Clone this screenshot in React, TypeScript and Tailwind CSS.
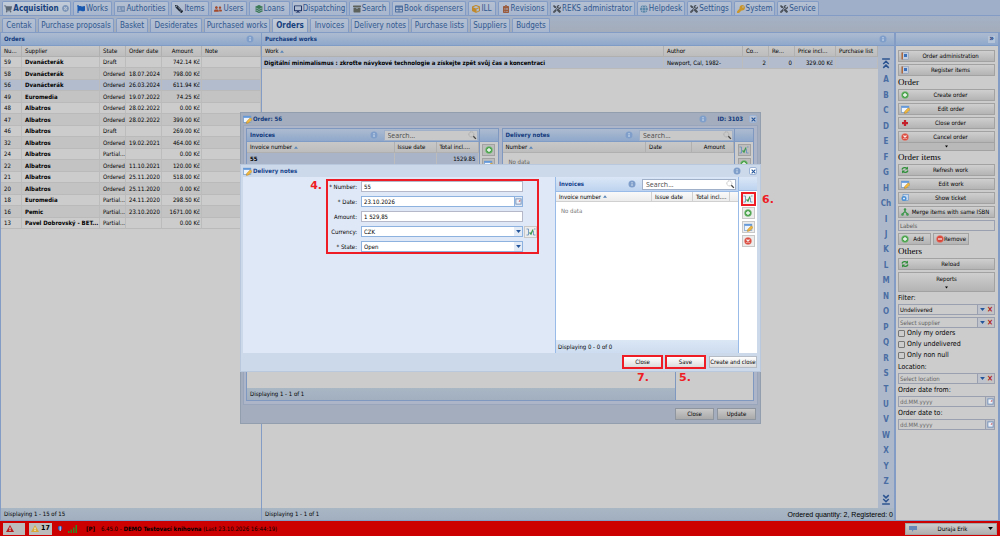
import type { ReactNode } from 'react'
import clsx from 'clsx'
import {
  FaShoppingCart, FaFlag, FaAddressCard, FaPencilAlt, FaUserFriends, FaArchive,
  FaCube, FaTools, FaKey, FaTable, FaClipboardList, FaLayerGroup, FaDesktop, FaGlobe, FaTimesCircle,
} from 'react-icons/fa'

const SANS = "font-['DejaVu_Sans_Condensed','Noto_Sans',sans-serif]"

/* ---------- icons ---------- */

function PlusIcon() {
  return (
    <svg viewBox="0 0 16 16" className="size-2 shrink-0">
      <circle cx="8" cy="8" r="7" fill="#4ba24c" stroke="#86c286" />
      <path d="M8 4v8M4 8h8" stroke="#f2f8f2" strokeWidth="2.6" />
    </svg>
  )
}

function RemoveIcon({ cross = false }: { cross?: boolean }) {
  return (
    <svg viewBox="0 0 16 16" className="size-2 shrink-0">
      <circle cx="8" cy="8" r="7" fill="#d8473a" stroke="#e88a7e" />
      <path d={cross ? 'M5 5l6 6M11 5l-6 6' : 'M4 8h8'} stroke="#f8eeee" strokeWidth="2.4" />
    </svg>
  )
}

function EditIcon() {
  return (
    <svg viewBox="0 0 16 16" className="size-[9px] shrink-0">
      <rect x="1" y="2" width="13" height="11" fill="#eef4fc" stroke="#5b8ac4" />
      <rect x="1" y="2" width="13" height="3" fill="#5b93d8" />
      <path d="M6 15l1-4 6-6 3 3-6 6z" fill="#f0b840" stroke="#b07818" strokeWidth=".8" />
    </svg>
  )
}

function ReportIcon() {
  return (
    <svg viewBox="0 0 16 16" className="size-2 shrink-0">
      <rect x="2" y="1" width="13" height="14" fill="#c3cde0" stroke="#8292ad" />
      <rect x="1" y="1" width="3" height="14" fill="#b06a40" />
      <rect x="6" y="4" width="6" height="6" fill="#3c70b8" />
    </svg>
  )
}

function CrossIcon() {
  return (
    <svg viewBox="0 0 16 16" className="size-2 shrink-0">
      <path d="M8 2v12M2 8h12" stroke="#c4202c" strokeWidth="4.500" />
    </svg>
  )
}

function RefreshIcon() {
  return (
    <svg viewBox="0 0 16 16" className="size-2 shrink-0" fill="none" stroke="#2f8f3a" strokeWidth="2.600">
      <path d="M2 7c1-4 7-5 10-2M14 9c-1 4-7 5-10 2" />
      <path d="M14 1v6H8zM2 15V9h6z" fill="#2f8f3a" stroke="none" />
    </svg>
  )
}

function TicketIcon() {
  return (
    <svg viewBox="0 0 16 16" className="size-2 shrink-0">
      <rect x="4" y="1" width="11" height="12" fill="#c8d8ec" stroke="#4a86c8" />
      <circle cx="6" cy="9" r="5" fill="#4a90d4" />
      <path d="M4 7.500h4v3H4z" fill="#dbe8f8" />
    </svg>
  )
}

function MergeIcon() {
  return (
    <svg viewBox="0 0 16 16" className="size-2 shrink-0" fill="none" stroke="#3a9648" strokeWidth="2.200">
      <path d="M8 3v4L3 12M8 7l5 5" />
      <circle cx="8" cy="3" r="1.500" /><circle cx="3" cy="13" r="1.500" /><circle cx="13" cy="13" r="1.500" />
    </svg>
  )
}

function LinkIcon() {
  return (
    <svg viewBox="0 0 20 16" className="h-2 w-[10px] shrink-0" fill="none">
      <path d="M1 2h4v12H1M19 2h-3M19 14h-4V6" stroke="#6b93bd" strokeWidth="1.800" />
      <path d="M7 9l3 3 4-9" stroke="#3f9a50" strokeWidth="2.600" />
    </svg>
  )
}

function InfoIcon() {
  return (
    <svg viewBox="0 0 16 16" className="size-2 shrink-0">
      <circle cx="8" cy="8" r="7" fill="#7f9fca" />
      <path d="M8 4v2M8 7v5" stroke="#d3dfef" strokeWidth="2" />
    </svg>
  )
}

function SearchIcon() {
  return (
    <svg viewBox="0 0 16 16" className="size-[9px] shrink-0">
      <circle cx="6" cy="6" r="4.500" fill="none" stroke="#9a9a9a" strokeWidth="1.200" strokeDasharray="2 1" />
      <path d="M9.500 9.500L14 14" stroke="#444" strokeWidth="2.400" />
    </svg>
  )
}

function CalendarIcon() {
  return (
    <svg viewBox="0 0 16 16" className="size-[7px]">
      <rect x="2" y="2" width="12" height="12" fill="#eef2f8" stroke="#6c8cb8" strokeWidth="2" />
      <path d="M8 8l4-4v4z" fill="#c03030" />
    </svg>
  )
}

function Arrow({ className = 'fill-[#24559a]' }: { className?: string }) {
  return (
    <svg viewBox="0 0 8 5" className={clsx('h-[3px] w-[5px] shrink-0', className)}>
      <path d="M0 0h8L4 5z" />
    </svg>
  )
}

function SortArrow() {
  return (
    <svg viewBox="0 0 8 5" className="inline h-[3px] w-1 fill-[#5a86b8]">
      <path d="M0 5h8L4 0z" />
    </svg>
  )
}

function JumpIcon({ down = false }: { down?: boolean }) {
  return (
    <svg viewBox="0 0 14 20" className={clsx('h-[11px] w-2', down && 'rotate-180')} fill="none" stroke="#2c5490" strokeWidth="2.800">
      <path d="M0 2h14M2 11l5-5 5 5M2 18l5-5 5 5" />
    </svg>
  )
}

/* ---------- tabs ---------- */

const modules: { label: string; width: string; icon: ReactNode }[] = [
  { label: 'Acquisition', width: 'w-[69px]', icon: <FaShoppingCart className="text-[#5d6877]" /> },
  { label: 'Works', width: 'w-[39px]', icon: <FaFlag className="text-[#1858b0]" /> },
  { label: 'Authorities', width: 'w-[55px]', icon: <FaAddressCard className="text-[#7b93b5]" /> },
  { label: 'Items', width: 'w-[38px]', icon: <FaPencilAlt className="rotate-90 text-[#1d2733]" /> },
  { label: 'Users', width: 'w-9', icon: <FaUserFriends className="text-[#a34a2c]" /> },
  { label: 'Loans', width: 'w-[41px]', icon: <FaLayerGroup className="text-[#3b7a55]" /> },
  { label: 'Dispatching', width: 'w-[55px]', icon: <FaDesktop className="text-[#15295c]" /> },
  { label: 'Search', width: 'w-[41px]', icon: <FaArchive className="text-[#5d635c]" /> },
  { label: 'Book dispensers', width: 'w-[74px]', icon: <FaTable className="text-[#50719f]" /> },
  { label: 'ILL', width: 'w-7', icon: <FaCube className="text-[#c08a2c]" /> },
  { label: 'Revisions', width: 'w-[50px]', icon: <FaClipboardList className="text-[#9a5a3c]" /> },
  { label: 'REKS administrator', width: 'w-[85px]', icon: <FaTools className="text-[#4a5058]" /> },
  { label: 'Helpdesk', width: 'w-[48px]', icon: <FaGlobe className="text-[#5b87a8]" /> },
  { label: 'Settings', width: 'w-[45px]', icon: <FaTools className="text-[#4a5058]" /> },
  { label: 'System', width: 'w-[41px]', icon: <FaKey className="text-[#c9962e]" /> },
  { label: 'Service', width: 'w-[42px]', icon: <FaTools className="text-[#4a5058]" /> },
]

const sections = [
  { label: 'Centak', width: 'w-[34px]' },
  { label: 'Purchase proposals', width: 'w-[76px]' },
  { label: 'Basket', width: 'w-8' },
  { label: 'Desiderates', width: 'w-[52px]' },
  { label: 'Purchased works', width: 'w-[66px]' },
  { label: 'Orders', width: 'w-9' },
  { label: 'Invoices', width: 'w-[39px]' },
  { label: 'Delivery notes', width: 'w-[58px]' },
  { label: 'Purchase lists', width: 'w-[57px]' },
  { label: 'Suppliers', width: 'w-10' },
  { label: 'Budgets', width: 'w-[38px]' },
]

function Tab({ active, width, children }: { active: boolean; width: string; children: ReactNode }) {
  return (
    <button
      className={clsx(
        'flex shrink-0 items-center justify-center gap-px whitespace-nowrap rounded-t-xs border border-b-0 border-[#829cc6] text-[8px] leading-none',
        width,
        active
          ? 'bg-linear-to-b from-[#c3ccd9] to-[#b3bfcf] font-bold text-[#15407c]'
          : 'bg-linear-to-b from-[#b5c0d2] to-[#a8b6ce] text-[#30588f]',
      )}
    >
      {children}
    </button>
  )
}

/* ---------- tables ---------- */

type Row = [string, string, string, string, string]

const orders: Row[] = [
  ['59', 'Dvanácterák', 'Draft', '', '742.14 Kč'],
  ['58', 'Dvanácterák', 'Ordered', '18.07.2024', '798.00 Kč'],
  ['56', 'Dvanácterák', 'Ordered', '26.03.2024', '611.94 Kč'],
  ['49', 'Euromedia', 'Ordered', '19.07.2022', '74.25 Kč'],
  ['48', 'Albatros', 'Ordered', '28.02.2022', '0.00 Kč'],
  ['47', 'Albatros', 'Ordered', '28.02.2022', '399.00 Kč'],
  ['46', 'Albatros', 'Draft', '', '269.00 Kč'],
  ['32', 'Albatros', 'Ordered', '19.02.2021', '464.00 Kč'],
  ['24', 'Albatros', 'Partial...', '', '0.00 Kč'],
  ['22', 'Albatros', 'Ordered', '11.10.2021', '120.00 Kč'],
  ['21', 'Albatros', 'Ordered', '25.11.2020', '518.00 Kč'],
  ['20', 'Albatros', 'Ordered', '25.11.2020', '0.00 Kč'],
  ['18', 'Euromedia', 'Partial...', '24.11.2020', '298.50 Kč'],
  ['16', 'Pemic', 'Partial...', '23.10.2020', '1671.00 Kč'],
  ['13', 'Pavel Dobrovský - BET...', 'Partial...', '', '0.00 Kč'],
]

const TABLE = 'w-full table-fixed border-separate border-spacing-0 whitespace-nowrap text-left text-[6px] leading-none'
const TH = 'h-[11px] overflow-hidden border-r border-b border-[#b0b0b0] bg-linear-to-b from-[#c8c8c8] to-[#bdbdbd] px-[3px] py-0 font-normal'
const TD = 'overflow-hidden border-r border-b border-r-[#bcbcbc] border-b-[#bababa] px-[2px] py-0'
const HEAD = 'flex h-[13px] shrink-0 items-center border-b border-[#7f9cc6] bg-linear-to-b from-[#adbbd0] to-[#8fa8cb] px-[3px] text-[6px] font-bold leading-none text-[#11397c]'
const FOOT = 'flex h-3 shrink-0 items-center bg-linear-to-b from-[#a9b6c4] to-[#a1afbf] px-[3px] text-[6px] leading-none'

function OrdersTable() {
  return (
    <table className={TABLE}>
      <colgroup>
        <col className="w-[21px]" /><col className="w-[78px]" /><col className="w-[26px]" />
        <col className="w-9" /><col className="w-10" /><col />
      </colgroup>
      <thead>
        <tr>
          <th className={TH}>Nu...</th>
          <th className={TH}>Supplier</th>
          <th className={TH}>State</th>
          <th className={TH}>Order date</th>
          <th className={clsx(TH, 'pr-2 text-right')}>Amount</th>
          <th className={TH}>Note</th>
        </tr>
      </thead>
      <tbody>
        {orders.map(([num, supplier, state, date, amount]) => (
          <tr
            key={num}
            className={clsx('odd:h-[11px] even:h-3', num === '56' ? 'bg-[#b2bccc]' : 'odd:bg-[#cccccc] even:bg-[#c3c3c3]')}
          >
            <td className={clsx(TD, 'pl-[3px]')}>{num}</td>
            <td className={clsx(TD, 'pl-[3px] font-bold')}>{supplier}</td>
            <td className={clsx(TD, 'pl-[3px]')}>{state}</td>
            <td className={clsx(TD, 'pr-0 pl-[3px]')}>{date}</td>
            <td className={clsx(TD, 'px-0 pr-px text-right')}>{amount}</td>
            <td className={TD} />
          </tr>
        ))}
      </tbody>
    </table>
  )
}

function WorksTable() {
  return (
    <table className={TABLE}>
      <colgroup>
        <col /><col className="w-[79px]" /><col className="w-[26px]" />
        <col className="w-[26px]" /><col className="w-[41px]" /><col className="w-[42px]" />
      </colgroup>
      <thead>
        <tr>
          <th className={TH}>Work <SortArrow /></th>
          <th className={TH}>Author</th>
          <th className={TH}>Co...</th>
          <th className={TH}>Re...</th>
          <th className={TH}>Price incl...</th>
          <th className={TH}>Purchase list</th>
        </tr>
      </thead>
      <tbody>
        <tr className="h-3 bg-[#b2bccc]">
          <td className={clsx(TD, 'font-bold')}>
            Digitální minimalismus : zkroťte návykové technologie a získejte zpět svůj čas a koncentraci
          </td>
          <td className={clsx(TD, 'pl-[3px]')}>Newport, Cal, 1982-</td>
          <td className={clsx(TD, 'text-right')}>2</td>
          <td className={clsx(TD, 'text-right')}>0</td>
          <td className={clsx(TD, 'px-0 text-right')}>329.00 Kč</td>
          <td className={TD} />
        </tr>
      </tbody>
    </table>
  )
}

/* ---------- sidebar ---------- */

function SideButton({ icon, children }: { icon?: ReactNode; children: ReactNode }) {
  return (
    <button className="flex h-3 w-full items-center border border-[#a2a2a2] bg-linear-to-b from-[#cfcfcf] to-[#b4b4b4] px-[2px] text-[6px] leading-none">
      {icon}
      <span className="flex-1 whitespace-nowrap text-center">{children}</span>
    </button>
  )
}

function FilterSelect({ label, option, muted = false }: { label: string; option: string; muted?: boolean }) {
  return (
    <div className="flex h-[11px] shrink-0">
      <div className="relative flex-1">
        <select
          aria-label={label}
          className={clsx('block h-full w-full appearance-none border border-[#9aa0b0] bg-[#cccccc] px-px text-[6px] leading-none', muted && 'text-[#5f5f5f]')}
        >
          <option>{option}</option>
        </select>
        <span className="pointer-events-none absolute inset-y-px right-0 flex w-[9px] items-center justify-center border-l border-[#9aa0b0] bg-[#bfc4cc]">
          <Arrow />
        </span>
      </div>
      <button aria-label={`Clear ${label}`} className="flex w-[9px] items-center justify-center border border-l-0 border-[#9aa0b0] bg-[#c4c4c4] text-[8px] font-bold leading-none text-[#b01818]">×</button>
    </div>
  )
}

function DateFilter({ label }: { label: string }) {
  return (
    <div className="shrink-0">
      <label htmlFor={label} className="flex h-3 items-center text-[7px] leading-none">{label}</label>
      <div className="flex h-[11px]">
        <input id={label} placeholder="dd.MM.yyyy" className="w-0 flex-1 border border-[#9aa0b0] bg-[#cccccc] px-px text-[6px] leading-none placeholder:text-[#6a6a6a]" />
        <button aria-label="Pick date" className="flex w-[9px] items-center justify-center border border-l-0 border-[#9aa0b0] bg-[#bfc4cc]"><CalendarIcon /></button>
      </div>
    </div>
  )
}

function GroupTitle({ children }: { children: ReactNode }) {
  return <h2 className="flex h-[9px] shrink-0 items-center font-['Liberation_Serif',serif] text-[9px] leading-none">{children}</h2>
}

function Sidebar() {
  return (
    <aside className="flex w-[106px] shrink-0 flex-col border-r-2 border-l-2 border-[#829cc6] bg-[#cccccc]">
      <div className={clsx(HEAD, 'justify-end')}>
        <button aria-label="Collapse" className="flex size-[7px] items-center justify-center bg-[#b5c3d8] text-[8px] leading-none">»</button>
      </div>
      <div className="flex flex-col gap-[2px] py-1 pr-[3px] pl-[2px]">
        <SideButton icon={<ReportIcon />}>Order administration</SideButton>
        <SideButton icon={<ReportIcon />}>Register items</SideButton>
        <GroupTitle>Order</GroupTitle>
        <SideButton icon={<PlusIcon />}>Create order</SideButton>
        <SideButton icon={<EditIcon />}>Edit order</SideButton>
        <SideButton icon={<CrossIcon />}>Close order</SideButton>
        <div>
          <SideButton icon={<RemoveIcon cross />}>Cancel order</SideButton>
          <button aria-label="More" className="flex h-2 w-full items-center justify-center border border-t-0 border-[#a2a2a2] bg-[#b9b9b9]">
            <Arrow className="fill-black px-px" />
          </button>
        </div>
        <GroupTitle>Order items</GroupTitle>
        <SideButton icon={<RefreshIcon />}>Refresh work</SideButton>
        <SideButton icon={<EditIcon />}>Edit work</SideButton>
        <SideButton icon={<TicketIcon />}>Show ticket</SideButton>
        <SideButton icon={<MergeIcon />}>Merge items with same ISBN</SideButton>
        <input aria-label="Labels" placeholder="Labels" className="h-[11px] w-full border border-[#9aa0b0] bg-[#cccccc] px-px text-[6px] leading-none placeholder:text-[#555]" />
        <div className="flex gap-[2px] pr-[26px]">
          <SideButton icon={<PlusIcon />}>Add</SideButton>
          <SideButton icon={<RemoveIcon />}>Remove</SideButton>
        </div>
        <GroupTitle>Others</GroupTitle>
        <SideButton icon={<RefreshIcon />}>Reload</SideButton>
        <button className="flex h-5 flex-col items-center justify-center gap-1 border border-[#a2a2a2] bg-linear-to-b from-[#cfcfcf] to-[#b4b4b4] text-[6px] leading-none">
          Reports
          <Arrow className="fill-black px-px" />
        </button>
        <p className="text-[7px] leading-[8px]">Filter:</p>
        <FilterSelect label="Filter" option="Undelivered" />
        <div>
          <FilterSelect label="Supplier" option="Select supplier" muted />
          {['Only my orders', 'Only undelivered', 'Only non null'].map((text) => (
            <label key={text} className="flex h-[11px] items-center gap-[2px] text-[7px] leading-none">
              <input type="checkbox" className="size-[7px] appearance-none rounded-[1px] border border-[#777] bg-[#cccccc]" />
              {text}
            </label>
          ))}
        </div>
        <p className="text-[7px] leading-[8px]">Location:</p>
        <div>
          <FilterSelect label="Location" option="Select location" muted />
          <DateFilter label="Order date from:" />
          <DateFilter label="Order date to:" />
        </div>
      </div>
    </aside>
  )
}

const letters = ['A', 'B', 'C', 'D', 'E', 'F', 'G', 'H', 'Ch', 'I', 'J', 'K', 'L', 'M', 'N', 'O', 'P', 'Q', 'R', 'S', 'T', 'U', 'V', 'W', 'X', 'Y', 'Z']

function LetterIndex() {
  return (
    <nav className="flex w-4 shrink-0 flex-col items-center justify-between bg-[#adb9cb] pt-3 pb-[3px]">
      <button aria-label="First"><JumpIcon /></button>
      {letters.map((l) => (
        <button key={l} className="h-2 text-[8px] font-bold leading-none text-[#4a6da3]">{l}</button>
      ))}
      <button aria-label="Last"><JumpIcon down /></button>
    </nav>
  )
}

/* ---------- windows ---------- */

function SearchBox({ dim = false }: { dim?: boolean }) {
  return (
    <div className={clsx('flex h-[11px] w-[94px] items-center border border-[#9fb0c8] font-normal', dim ? 'bg-[#c9c9c9]' : 'bg-white')}>
      <input aria-label="Search" placeholder="Search..." className="w-0 flex-1 bg-transparent px-[3px] font-['Open_Sans',sans-serif] text-[7px] leading-none placeholder:text-[#4a4a4a]" />
      <SearchIcon />
    </div>
  )
}

function IconButton({ label, dim = false, marked = false, children }: { label: string; dim?: boolean; marked?: boolean; children: ReactNode }) {
  return (
    <button
      type="button"
      aria-label={label}
      className={clsx(
        'flex h-3 w-[13px] shrink-0 items-center justify-center border',
        marked ? 'border-[#ee1c25] bg-[#f0f0f0] outline outline-[#ee1c25]' : dim ? 'border-[#a2a2a2] bg-[#bdbdbd]' : 'border-[#c8c8c8] bg-[#ececec]',
      )}
    >
      {children}
    </button>
  )
}

function WindowButton({ dim = false, marked = false, children }: { dim?: boolean; marked?: boolean; children: ReactNode }) {
  return (
    <button
      className={clsx(
        'h-3 whitespace-nowrap border text-[6px] leading-none',
        dim ? 'w-[39px] border-[#8f959e] bg-linear-to-b from-[#c9c9c9] to-[#aaaaaa]' : 'bg-linear-to-b from-white to-[#dcdcdc]',
        !dim && (marked ? 'w-[39px] border-[#ee1c25] outline outline-[#ee1c25]' : 'w-12 border-[#b5bcc6]'),
      )}
    >
      {children}
    </button>
  )
}

function CloseButton({ dim = false }: { dim?: boolean }) {
  return (
    <button
      aria-label="Close window"
      className={clsx('flex size-2 items-center justify-center rounded-xs border border-[#9db4d6]', dim ? 'bg-[#bcc6d6]' : 'bg-white')}
    >
      <svg viewBox="0 0 8 8" className="size-[5px]"><path d="M1 1l6 6M7 1L1 7" stroke="#24559a" strokeWidth="1.800" /></svg>
    </button>
  )
}

function OrderWindow() {
  return (
    <section className="absolute top-[112px] left-[240px] flex h-[312px] w-[521px] flex-col border border-[#929dae] bg-[#a3adbd] px-[2px] leading-none">
      <header className="flex h-3 shrink-0 items-center gap-px text-[6px] font-bold text-[#11397c]">
        <EditIcon />
        <h2>Order: 56</h2>
        <span className="ml-auto"><InfoIcon /></span>
        <span className="ml-[9px]">ID: 3103</span>
        <span className="ml-[5px] pr-px"><CloseButton dim /></span>
      </header>
      <div className="flex flex-1 flex-col border border-[#98a5ba] bg-[#acb6c8] pt-[2px] pr-[3px] pb-[3px] pl-[2px]">
        <div className="flex h-[244px] shrink-0 gap-[3px]">
          <div className="flex flex-1 border border-[#7f98c0] bg-[#cccccc]">
            <div className="flex flex-1 flex-col border-r border-[#7f98c0]">
              <div className={clsx(HEAD, 'justify-between pr-px')}>
                Invoices
                <span className="flex items-center gap-[6px]"><InfoIcon /><SearchBox dim /></span>
              </div>
              <table className={TABLE}>
                <colgroup><col /><col className="w-[42px]" /><col className="w-[42px]" /></colgroup>
                <thead>
                  <tr>
                    <th className={TH}>Invoice number <SortArrow /></th>
                    <th className={TH}>Issue date</th>
                    <th className={TH}>Total incl....</th>
                  </tr>
                </thead>
                <tbody>
                  <tr className="h-3 bg-[#a9b4c9]">
                    <td className={clsx(TD, 'pl-[3px] font-bold')}>55</td>
                    <td className={TD} />
                    <td className={clsx(TD, 'text-right')}>1529.85</td>
                  </tr>
                </tbody>
              </table>
            </div>
            <div className="flex w-[18px] flex-col items-center gap-[2px]">
              <div className={clsx(HEAD, 'w-full')} />
              <IconButton label="Add invoice" dim><PlusIcon /></IconButton>
              <IconButton label="Edit invoice" dim><EditIcon /></IconButton>
            </div>
          </div>
          <div className="flex flex-1 border border-[#7f98c0] bg-[#cccccc]">
            <div className="flex flex-1 flex-col border-r border-[#7f98c0]">
              <div className={clsx(HEAD, 'justify-between pr-px')}>
                Delivery notes
                <span className="flex items-center gap-[6px]"><InfoIcon /><SearchBox dim /></span>
              </div>
              <table className={TABLE}>
                <colgroup><col /><col className="w-[46px]" /><col className="w-[42px]" /></colgroup>
                <thead>
                  <tr>
                    <th className={TH}>Number <SortArrow /></th>
                    <th className={TH}>Date</th>
                    <th className={clsx(TH, 'pr-2 text-right')}>Amount</th>
                  </tr>
                </thead>
              </table>
              <p className="px-[6px] pt-[6px] text-[6px] text-[#606060]">No data</p>
            </div>
            <div className="flex w-[18px] flex-col items-center gap-[2px]">
              <div className={clsx(HEAD, 'w-full')} />
              <IconButton label="Link delivery note" dim><LinkIcon /></IconButton>
              <IconButton label="Add delivery note" dim><PlusIcon /></IconButton>
            </div>
          </div>
        </div>
        <div className="flex flex-1 border border-t-0 border-[#7f98c0] bg-[#cccccc]">
          <div className="flex flex-1 flex-col justify-end border-r border-[#7f98c0]">
            <div className={FOOT}>Displaying 1 - 1 of 1</div>
          </div>
          <div className="w-[77px]" />
        </div>
      </div>
      <footer className="flex h-[18px] shrink-0 items-center justify-end gap-[3px] pr-[2px]">
        <WindowButton dim>Close</WindowButton>
        <WindowButton dim>Update</WindowButton>
      </footer>
    </section>
  )
}

const FIELD = 'h-[11px] border px-[2px] text-[6px] leading-none bg-white'

function FormRow({ id, label, children }: { id: string; label: string; children: ReactNode }) {
  return (
    <div className="flex h-[15px] items-center">
      <label htmlFor={id} className="w-[35px] shrink-0 pr-1 text-right text-[6px] leading-none whitespace-nowrap">{label}</label>
      {children}
    </div>
  )
}

function FormSelect({ id, option }: { id: string; option: string }) {
  return (
    <div className="relative w-[162px]">
      <select id={id} className={clsx(FIELD, 'block w-full appearance-none border-[#8db2e0]')}>
        <option>{option}</option>
      </select>
      <span className="pointer-events-none absolute inset-y-px right-px flex w-2 items-center justify-center bg-[#e3ebf6]"><Arrow /></span>
    </div>
  )
}

function DeliveryNoteWindow() {
  return (
    <section className="absolute top-[164px] left-[240px] flex h-[208px] w-[521px] flex-col border border-[#b9c8dc] bg-[#ccd9ea] pr-[3px] pl-[2px] leading-none">
      <header className="flex h-3 shrink-0 items-center gap-px font-bold text-[#15428b]">
        <EditIcon />
        <h2 className="text-[6px]">Delivery notes</h2>
        <span className="ml-auto"><InfoIcon /></span>
        <span className="ml-[7px]"><CloseButton /></span>
      </header>
      <div className="flex flex-1 bg-[#dfe8f6]">
        <div className="flex flex-1 items-start justify-end pt-[2px] pr-4">
          <strong className="pt-px pr-[4px] font-['DejaVu_Sans',sans-serif] text-[11px] leading-none text-[#ee1c25]">4.</strong>
          <form className="w-[213px] outline-2 -outline-offset-2 outline-[#ee1c25]">
            <FormRow id="number" label="* Number:">
              <input id="number" defaultValue="55" className={clsx(FIELD, 'w-[162px] border-[#b5b8c8]')} />
            </FormRow>
            <FormRow id="date" label="* Date:">
              <input id="date" defaultValue="23.10.2026" className={clsx(FIELD, 'w-[154px] border-[#8db2e0]')} />
              <button type="button" aria-label="Pick date" className="flex h-[11px] w-2 items-center justify-center border border-l-0 border-[#8db2e0] bg-[#e3ebf6]"><CalendarIcon /></button>
            </FormRow>
            <FormRow id="amount" label="Amount:">
              <input id="amount" defaultValue="1 529,85" className={clsx(FIELD, 'w-[162px] border-[#b5b8c8]')} />
            </FormRow>
            <FormRow id="currency" label="Currency:">
              <FormSelect id="currency" option="CZK" />
              <span className="ml-px flex"><IconButton label="Currency rates"><LinkIcon /></IconButton></span>
            </FormRow>
            <FormRow id="state" label="* State:">
              <FormSelect id="state" option="Open" />
            </FormRow>
          </form>
        </div>
        <div className="flex w-[184px] flex-col border-x border-[#99bbe8] bg-white">
          <div className="flex h-[15px] shrink-0 items-center justify-between border-b border-[#99bbe8] bg-linear-to-b from-[#dbe7f7] to-[#bdd3ef] pr-[2px] pl-[3px] text-[6px] font-bold text-[#15428b]">
            Invoices
            <span className="flex items-center gap-[6px]"><InfoIcon /><SearchBox /></span>
          </div>
          <table className={TABLE}>
            <colgroup><col /><col className="w-[41px]" /><col className="w-[37px]" /><col className="w-2" /></colgroup>
            <thead>
              <tr>
                {['Invoice number', 'Issue date', 'Total incl....', ''].map((h, i) => (
                  <th key={h} className="h-[10px] border-r border-b border-[#d0d0d0] bg-linear-to-b from-[#f9f9f9] to-[#ececec] py-0 pr-0 pl-[3px] font-normal last:border-r-0">
                    {h} {i === 0 && <SortArrow />}
                  </th>
                ))}
              </tr>
            </thead>
          </table>
          <p className="px-[5px] pt-[6px] text-[6px] text-[#777]">No data</p>
          <div className="mt-auto flex h-[13px] items-center bg-linear-to-b from-[#dbe7f5] to-[#cddcf0] px-[2px] text-[6px]">Displaying 0 - 0 of 0</div>
        </div>
        <div className="flex w-[18px] flex-col items-center gap-[2px] bg-white">
          <div className="h-[14px] w-full shrink-0 border-b border-[#99bbe8] bg-linear-to-b from-[#dbe7f7] to-[#bdd3ef]" />
          <IconButton label="Link invoice" marked><LinkIcon /></IconButton>
          <IconButton label="Add invoice"><PlusIcon /></IconButton>
          <IconButton label="Edit invoice"><EditIcon /></IconButton>
          <IconButton label="Remove invoice"><RemoveIcon cross /></IconButton>
        </div>
      </div>
      <footer className="flex h-[18px] shrink-0 items-center justify-end gap-1">
        <WindowButton marked>Close</WindowButton>
        <WindowButton marked>Save</WindowButton>
        <WindowButton>Create and close</WindowButton>
      </footer>
    </section>
  )
}

const STEP = "absolute font-['DejaVu_Sans',sans-serif] text-[11px] leading-none text-[#ee1c25]"

export default function App() {
  return (
    <div className={clsx('relative flex h-screen flex-col overflow-hidden bg-[#a3b2ca] text-black', SANS)}>
      <nav className="flex h-4 shrink-0 gap-[2px] border-b border-[#829cc6] bg-[#a0afc9] px-[2px] pt-px">
        {modules.map(({ label, width, icon }, i) => (
          <Tab key={label} active={i === 0} width={width}>
            <span className="shrink-0 text-[8px]">{icon}</span>
            {label}
            {i === 0 && <FaTimesCircle className="ml-[2px] size-[7px] text-[#7c95b8]" />}
          </Tab>
        ))}
      </nav>
      <nav className="flex h-[17px] shrink-0 gap-[2px] border-b border-[#829cc6] bg-linear-to-b from-[#a4b1c6] to-[#a3acb9] px-[2px] pt-[2px]">
        {sections.map(({ label, width }) => (
          <Tab key={label} active={label === 'Orders'} width={width}>{label}</Tab>
        ))}
      </nav>

      <main className="flex min-h-0 flex-1 border-b border-[#829cc6] bg-[#cccccc]">
        <section className="flex w-[262px] shrink-0 flex-col border-x border-[#829cc6]">
          <header className={clsx(HEAD, 'justify-between pr-[7px]')}>Orders<InfoIcon /></header>
          <div className="flex-1"><OrdersTable /></div>
          <footer className={FOOT}>Displaying 1 - 15 of 15</footer>
        </section>
        <section className="flex min-w-0 flex-1 flex-col">
          <header className={clsx(HEAD, 'justify-between pr-[7px]')}>Purchased works<InfoIcon /></header>
          <div className="flex min-h-0 flex-1">
            <div className="min-w-0 flex-1"><WorksTable /></div>
            <LetterIndex />
          </div>
          <footer className={clsx(FOOT, 'justify-between pr-px')}>
            Displaying 1 - 1 of 1
            <span className="font-['Liberation_Sans',sans-serif] text-[7px]">Ordered quantity: 2, Registered: 0</span>
          </footer>
        </section>
        <Sidebar />
      </main>

      <footer className="flex h-[15px] shrink-0 items-center bg-[#cc0000] px-[3px] text-[6px] leading-none">
        <button aria-label="Errors" className="flex h-3 w-[22px] items-center bg-[#bcbcbc] px-[3px]">
          <svg viewBox="0 0 16 14" className="h-[7px] w-2"><path d="M8 0l8 14H0z" fill="#b81c1c" /><path d="M8 5v4M8 10v2" stroke="#fff" strokeWidth="2" /></svg>
        </button>
        <button className="ml-1 flex h-3 w-[23px] items-center gap-[2px] bg-[#bcbcbc] px-[2px] text-[7px] font-bold">
          <svg viewBox="0 0 16 14" className="h-[7px] w-2"><path d="M8 0l8 14H0z" fill="#d8a83a" /><path d="M8 5v4M8 10v2" stroke="#fff" strokeWidth="2" /></svg>
          17
        </button>
        <svg viewBox="0 0 10 14" className="ml-[5px] h-[7px] w-[6px]"><circle cx="5" cy="6" r="4.500" fill="#3458b0" /><path d="M4 3h3v9H4z" fill="#9fb8e8" /></svg>
        <svg viewBox="0 0 18 16" className="ml-[5px] h-2 w-[9px] fill-[#2f8a22]"><path d="M0 12h3v4H0zM5 9h3v7H5zM10 5h3v11h-3zM15 0h3v16h-3z" /></svg>
        <b className="ml-[9px]">[P]</b>
        <span className="ml-[6px]">6.45.0 - <b>DEMO Testovací knihovna</b> (Last 23.10.2026 16:44:19)</span>
        <button className="ml-auto flex h-3 w-[92px] items-center border border-[#a5a5a5] bg-linear-to-b from-[#cccccc] to-[#b0b0b0] px-[3px]">
          <svg viewBox="0 0 16 12" className="h-[6px] w-2 fill-[#6688b8]"><path d="M0 0h16v8H9l-3 4V8H0z" /></svg>
          <span className="flex-1 text-center">Duraja Erik</span>
          <Arrow className="fill-black" />
        </button>
      </footer>

      <OrderWindow />
      <DeliveryNoteWindow />
      <strong className={clsx(STEP, 'top-[194px] left-[762px]')}>6.</strong>
      <strong className={clsx(STEP, 'top-[372px] left-[637px]')}>7.</strong>
      <strong className={clsx(STEP, 'top-[372px] left-[679px]')}>5.</strong>
    </div>
  )
}
